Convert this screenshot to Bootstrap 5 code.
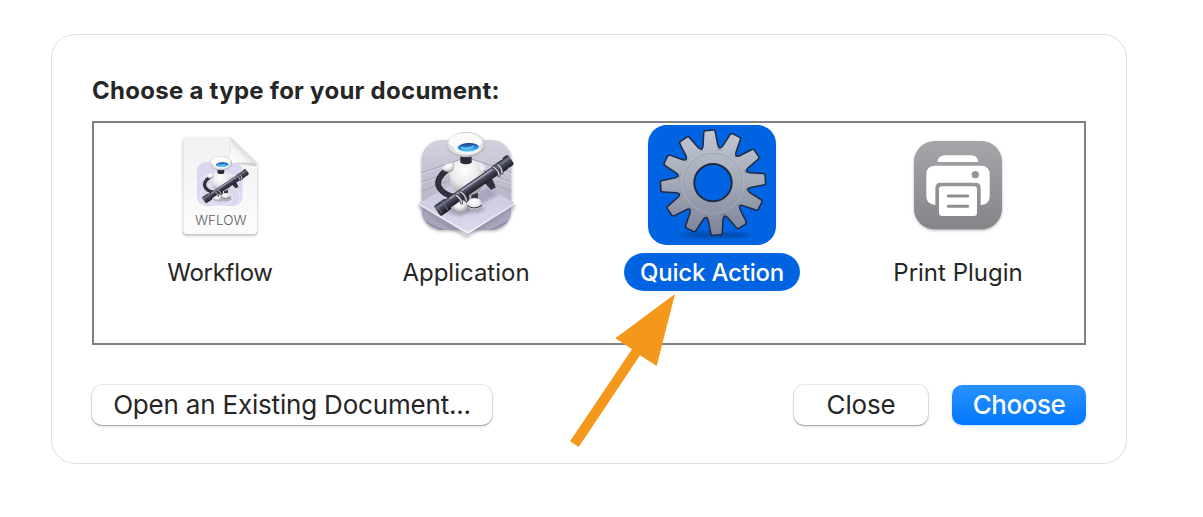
<!DOCTYPE html>
<html lang="en">
<head>
<meta charset="utf-8">
<meta name="viewport" content="width=device-width, initial-scale=1">
<title>Choose a document type</title>
<link href="https://cdn.jsdelivr.net/npm/bootstrap@5.3.0/dist/css/bootstrap.min.css" rel="stylesheet">
<style>
body{font-family:Inter,"Liberation Sans",sans-serif;color:#262626;background:#fff;overflow:hidden}
.sheet{width:1076px;height:430px;margin:34px 0 0 51px;padding:40px 40px 0;border:1px solid #dedede;border-radius:24px}
.sheet-title{font-size:24px;line-height:32px;font-weight:700;margin:0 0 14px;letter-spacing:.27px;white-space:nowrap}
.picker{height:224px;border:2px solid #808080;padding:2px 3px}
.kind{width:246px}
.kind svg.pic{width:128px;height:120px;display:block;overflow:visible}
.kind-name{font-size:24px;line-height:40px;height:38px;margin-top:8px;padding:0 16px;white-space:nowrap}
.kind-tight{letter-spacing:-.28px}
.picked{background:#0063e1;color:#fff;border-radius:20px/19px;width:176px;padding:0;text-align:center;font-weight:500;letter-spacing:-.2px}
.pointer{left:-20px;top:168px;width:110px;height:156px;pointer-events:none}
.actions{margin-top:40px}
.push{height:40px;padding:0;border:0;border-radius:10px;font-size:26px;line-height:37px;padding-bottom:2px;letter-spacing:-.19px;color:#262626;background:#fff;white-space:nowrap;box-shadow:0 0 0 1px rgba(0,0,0,.09),0 1px 1px rgba(0,0,0,.22),0 2px 3px rgba(0,0,0,.1)}
.push-open{width:400px}
.push-close{width:134px}
.push-go{width:134px;color:#fff;font-weight:500;letter-spacing:-.5px;background:linear-gradient(#2a91ff,#0077ff);box-shadow:0 1px 3px rgba(0,122,255,.25)}
</style>
</head>
<body>
<svg width="0" height="0" class="position-absolute" aria-hidden="true">
  <defs>
    <radialGradient id="shell" cx=".42" cy=".3" r=".75"><stop offset="0" stop-color="#fff"/><stop offset=".5" stop-color="#ebebed"/><stop offset="1" stop-color="#98989e"/></radialGradient>
    <linearGradient id="wall" x2="0" y2="1"><stop offset="0" stop-color="#d2d1de"/><stop offset="1" stop-color="#a9a8bd"/></linearGradient>
    <linearGradient id="floor" x2="0" y2="1"><stop offset="0" stop-color="#c2c1d6"/><stop offset="1" stop-color="#dcdbee"/></linearGradient>
    <linearGradient id="eye" x2="0" y2="1"><stop offset="0" stop-color="#153a80"/><stop offset=".5" stop-color="#2a86dc"/><stop offset="1" stop-color="#62d8fa"/></linearGradient>
    <linearGradient id="tube" gradientUnits="userSpaceOnUse" x1="0" y1="-18" x2="0" y2="18"><stop offset="0" stop-color="#2b2b38"/><stop offset=".25" stop-color="#77778e"/><stop offset=".45" stop-color="#434354"/><stop offset="1" stop-color="#171720"/></linearGradient>
    <linearGradient id="paper" x2="0" y2="1"><stop offset="0" stop-color="#f1f1f1"/><stop offset="1" stop-color="#fcfcfc"/></linearGradient>
    <linearGradient id="fold" x1="0" y1="1" x2=".75" y2=".25"><stop offset="0" stop-color="#fff"/><stop offset=".45" stop-color="#f6f6f6"/><stop offset="1" stop-color="#b4b4b4"/></linearGradient>
    <linearGradient id="curl" x2="0" y2="1"><stop offset="0" stop-color="#d5d5d5" stop-opacity=".2"/><stop offset="1" stop-color="#bbb"/></linearGradient>
    <linearGradient id="steel" x2="0" y2="1"><stop offset="0" stop-color="#c3c8d3"/><stop offset=".5" stop-color="#a4a9b8"/><stop offset="1" stop-color="#7b8195"/></linearGradient>
    <linearGradient id="grey" x2="0" y2="1"><stop offset="0" stop-color="#a6a5aa"/><stop offset="1" stop-color="#858489"/></linearGradient>
    <filter id="soft" x="-20%" y="-20%" width="140%" height="150%"><feGaussianBlur stdDeviation="4"/></filter>
    <g id="robot">
      <ellipse cx="190" cy="268" rx="50" ry="12" fill="#77758d" opacity=".4" filter="url(#soft)"/>
      <path d="M125 150Q88 180 104 205Q118 226 148 230" fill="none" stroke="#272733" stroke-width="17"/>
      <path d="M125 150Q88 180 104 205Q118 226 148 230" fill="none" stroke="#6a6a80" stroke-width="11" stroke-dasharray="2 4" opacity=".5"/>
      <path d="M238 150Q266 176 272 203L258 209L240 190Z" fill="#30303c"/>
      <path d="M163 222h30v25h-30zM199 218h20v22h-20z" fill="#343441"/>
      <ellipse cx="166" cy="258" rx="21" ry="19" fill="url(#shell)"/>
      <ellipse cx="209" cy="253" rx="23" ry="19" fill="url(#shell)"/>
      <path d="M187 257Q207 271 231 256" fill="none" stroke="#33333d" stroke-width="3"/>
      <path d="M139 129Q186 110 230 130Q247 162 236 191Q227 225 188 226Q145 222 136 184Q131 152 139 129Z" fill="url(#shell)"/>
      <path d="M147 127Q119 130 110 146Q119 158 139 156Q151 148 147 127Z" fill="url(#shell)"/>
      <path d="M166 108h34v20q-17 9-34 0z" fill="#2b2b38"/>
      <path d="M218 125q20 4 24 20l-12 10z" fill="#ededf0"/>
      <ellipse cx="183" cy="74" rx="57" ry="38" fill="#b5b5ba"/>
      <ellipse cx="182" cy="72" rx="55" ry="35" fill="#dedee1"/>
      <ellipse cx="181" cy="64" rx="50" ry="25" fill="#fbfbfc"/>
      <ellipse cx="186" cy="85" rx="38" ry="18" fill="#f6f6f8"/>
      <ellipse cx="190" cy="82" rx="32" ry="13" fill="url(#eye)" transform="rotate(-3 190 82)"/>
      <path d="M168 82q18 8 39-4" stroke="#8eefff" stroke-width="3" fill="none"/>
      <g transform="translate(99 272) rotate(-34.5)">
        <rect x="-3" y="-19" width="41" height="38" rx="6" fill="url(#tube)"/>
        <rect x="28" y="-16" width="186" height="30" fill="url(#tube)"/>
        <rect x="208" y="-18" width="39" height="34" rx="5" fill="url(#tube)"/>
        <rect x="245" y="-21" width="23" height="36" rx="8" fill="url(#tube)"/>
        <path d="M5-15v29M26-17v34M220-16v31" stroke="#6b6a83" stroke-width="3"/>
        <path d="M50-10h153" stroke="#aaa8bf" stroke-width="4"/>
      </g>
      <g fill="none" stroke="#454552" stroke-width="9" stroke-linecap="round"><path d="M153 226q15 8 17 23M167 216q15 9 17 26M265 141q17 10 17 25M279 134q12 10 12 25"/></g>
      <g fill="none" stroke="#d4d4db" stroke-width="4" stroke-linecap="round"><path d="M153 226q15 8 17 23M167 216q15 9 17 26M265 141q17 10 17 25M279 134q12 10 12 25"/></g>
    </g>
    <g id="teeth">
      <path id="tooth" d="M-29-99Q-21-103-20-111L-15-151Q-15-155-11-155H11Q15-155 15-151L20-111Q21-103 29-99Z"/>
      <use href="#tooth" transform="rotate(30)"/><use href="#tooth" transform="rotate(60)"/><use href="#tooth" transform="rotate(90)"/>
      <use href="#tooth" transform="rotate(120)"/><use href="#tooth" transform="rotate(150)"/><use href="#tooth" transform="rotate(180)"/>
      <use href="#tooth" transform="rotate(210)"/><use href="#tooth" transform="rotate(240)"/><use href="#tooth" transform="rotate(270)"/>
      <use href="#tooth" transform="rotate(300)"/><use href="#tooth" transform="rotate(330)"/>
      <circle r="102"/>
    </g>
    <mask id="gearmask" maskUnits="userSpaceOnUse" x="-170" y="-170" width="340" height="340"><use href="#teeth" fill="#fff" transform="rotate(-4)"/><circle r="57" fill="#000"/></mask>
    <clipPath id="tile"><rect x="50" y="60" width="269" height="270" rx="61"/></clipPath>
    <clipPath id="minitile"><rect x="81" y="110" width="137" height="133" rx="29"/></clipPath>
  </defs>
</svg>

<main class="sheet">
  <h1 class="sheet-title">Choose a type for your document:</h1>
  <div class="picker d-flex">
    <div class="kind d-flex flex-column align-items-center">
      <svg class="pic" viewBox="-42 0 384 360">
        <path d="M43 42H181L261 118V324Q261 331 255 331H46Q40 331 40 324V46Q40 42 46 42Z" fill="#777" opacity=".6" filter="url(#soft)"/>
        <path d="M46 35H181L261 115V322Q261 328 255 328H46Q40 328 40 322V41Q40 35 46 35Z" fill="url(#paper)"/>
        <path d="M177 36Q181 105 177 117Q190 113 258 124L260 114Z" fill="url(#curl)" opacity=".7"/>
        <path d="M40 320Q40 329 48 329H253Q261 329 261 320" fill="none" stroke="#bbb" stroke-width="2"/>
        <g clip-path="url(#minitile)"><path d="M81 110h137v133H81z" fill="#d9d8ef"/><g fill="none" stroke="#edecf9" stroke-width="3"><ellipse cx="150" cy="220" rx="38" ry="22"/><ellipse cx="150" cy="215" rx="60" ry="43"/><ellipse cx="150" cy="208" rx="80" ry="66"/></g></g>
        <path d="M181 35L261 115Q222 109 183 115Q176 115 178 108Q184 77 181 35Z" fill="url(#fold)"/>
        <use href="#robot" transform="translate(45 73) scale(.588 .56)"/>
        <text x="75" y="300" font-family="Inter,sans-serif" font-weight="300" font-size="41" textLength="155" lengthAdjust="spacingAndGlyphs" fill="#606060">WFLOW</text>
      </svg>
      <div class="kind-name kind-tight">Workflow</div>
    </div>
    <div class="kind d-flex flex-column align-items-center">
      <svg class="pic" viewBox="-9 15 384 360">
        <rect x="49" y="63" width="271" height="271" rx="61" fill="#666" opacity=".45" filter="url(#soft)"/>
        <g clip-path="url(#tile)">
          <path d="M50 60h269v270H50z" fill="url(#wall)"/>
          <path d="M50 158L185 112L319 158M50 186L185 138L319 186M50 213L185 162L319 213" fill="none" stroke="#a3a2b7" stroke-width="3"/>
          <path d="M50 162L185 116L319 162M50 190L185 142L319 190" fill="none" stroke="#dddce8" stroke-width="2"/>
          <path d="M50 276L185 354L319 276V330H50z" fill="#a6a5bb"/>
          <path d="M50 300L160 354M319 300L210 354" stroke="#8b899f" stroke-width="4"/>
        </g>
        <path d="M40 259L184 350L330 259" fill="none" stroke="#66647b" stroke-width="8" opacity=".45" filter="url(#soft)"/>
        <path d="M40 249L186 168L329 249L188 335Z" fill="url(#floor)"/>
        <path d="M40 249L188 335L329 249V254L188 343L40 254Z" fill="#f0effa"/>
        <path d="M40 255L188 344L329 255" fill="none" stroke="#9b99ae" stroke-width="2"/>
        <path d="M121 278L246 202L282 222L165 290Z" fill="#77758f" opacity=".4" filter="url(#soft)"/>
        <use href="#robot"/>
      </svg>
      <div class="kind-name">Application</div>
    </div>
    <div class="kind d-flex flex-column align-items-center position-relative">
      <svg class="pic" viewBox="24 21 384 360">
        <rect x="24" y="21" width="384" height="360" rx="56" fill="#0063e1"/>
        <ellipse cx="224" cy="351" rx="105" ry="10" fill="#092c67" opacity=".4" filter="url(#soft)"/>
        <g transform="translate(219 194)">
          <g transform="rotate(-4)"><use href="#teeth" fill="#202b42" stroke="#202b42" stroke-width="9" stroke-linejoin="round"/></g>
          <g mask="url(#gearmask)"><rect x="-165" y="-165" width="330" height="330" fill="url(#steel)"/></g>
          <circle r="89" fill="none" stroke="#8f94a5" stroke-width="3" opacity=".65"/>
          <circle r="92" fill="none" stroke="#d0d3dc" stroke-width="2" opacity=".45"/>
          <circle r="56" fill="#0063e1" stroke="#202b42" stroke-width="6"/>
        </g>
      </svg>
      <div class="kind-name picked">Quick Action</div>
      <svg class="pointer position-absolute" viewBox="27 129 330 468"><path d="M345 132L290 348L240 316L56 591L30 574L216 298L166 265Z" fill="#f4981b"/></svg>
    </div>
    <div class="kind d-flex flex-column align-items-center">
      <svg class="pic" viewBox="-18 -15 384 360">
        <rect x="43" y="37" width="262" height="264" rx="62" fill="#555" opacity=".5" filter="url(#soft)"/>
        <rect x="42" y="33" width="264" height="265" rx="62" fill="url(#grey)"/>
        <path d="M112 96Q115 76 135 76H213Q233 76 235 96Z" fill="#fff"/>
        <path d="M106 107H243Q269 107 269 133V199Q269 221 246 225H242V174Q242 158 226 158H122Q106 158 106 174V225Q79 222 79 199V133Q79 107 106 107Z" fill="#fff"/>
        <circle cx="226" cy="134" r="11" fill="#96959a"/>
        <rect x="117" y="169" width="114" height="89" rx="9" fill="#fff"/>
        <path d="M145 198H203M145 229H203" stroke="#8e8d92" stroke-width="9" stroke-linecap="round"/>
      </svg>
      <div class="kind-name">Print Plugin</div>
    </div>
  </div>
  <div class="actions d-flex align-items-center">
    <button type="button" class="btn push push-open">Open an Existing Document...</button>
    <button type="button" class="btn push push-close ms-auto">Close</button>
    <button type="button" class="btn push push-go ms-4">Choose</button>
  </div>
</main>
<script src="https://cdn.jsdelivr.net/npm/bootstrap@5.3.0/dist/js/bootstrap.bundle.min.js"></script>
</body>
</html>
